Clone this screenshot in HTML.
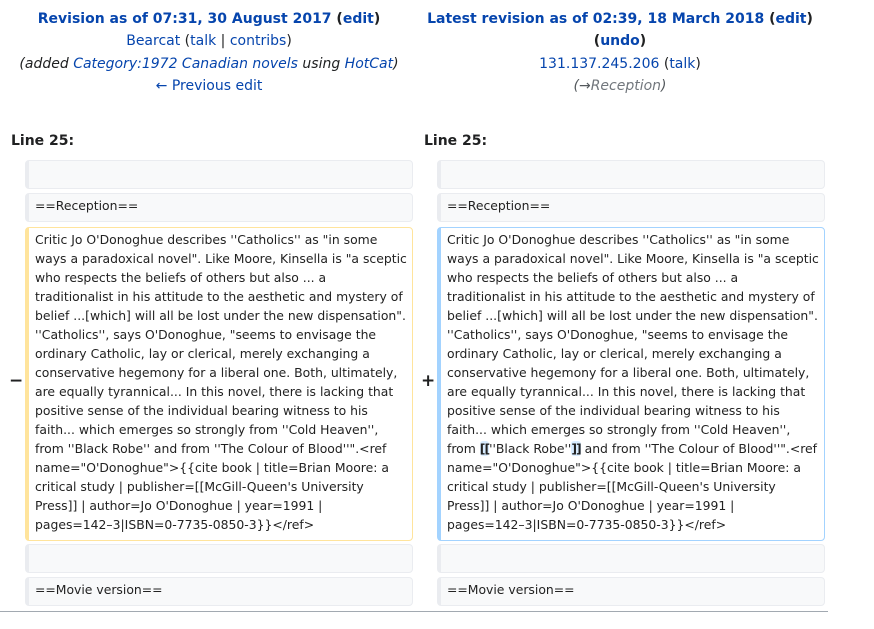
<!DOCTYPE html>
<html><head><meta charset="utf-8"><style>
body{margin:0;width:874px;height:629px;background:#fff;font-family:"DejaVu Sans","Liberation Sans",sans-serif;color:#202122;position:relative;overflow:hidden}
a{color:#0645ad;text-decoration:none}
.h{position:absolute;top:8px;text-align:center;font-size:14px;line-height:22.4px}
.h b a{color:#0645ad}
.ln{position:absolute;top:133px;font-weight:bold;font-size:14px}
.box{position:absolute;box-sizing:border-box;background:#f8f9fa;border:1px solid #eaecf0;border-left:4px solid #eaecf0;border-radius:4px;font-size:12.4px;line-height:19px;padding:2px 2px 3px 6px;white-space:nowrap;color:#222;overflow:hidden}
.del{background:#fff;border-color:#ffe49c}
.add{background:#fff;border-color:#a3d3ff}
.mk{position:absolute;font-size:17px;font-weight:bold}
.hl{background:#d8ecff;font-weight:bold;border-radius:3px;letter-spacing:-1px}
.line{position:absolute;left:0;top:611px;width:828px;height:1px;background:#a2a9b1}
</style></head><body>
<div class="h" style="left:0;width:418px"><b><a>Revision as of 07:31, 30 August 2017</a> (<a>edit</a>)</b><br><a>Bearcat</a> (<a>talk</a> | <a>contribs</a>)<br><i>(added <a>Category:1972 Canadian novels</a> using <a>HotCat</a>)</i><br><a>← Previous edit</a></div>
<div class="h" style="left:412px;width:416px"><b><a>Latest revision as of 02:39, 18 March 2018</a> (<a>edit</a>)<br>(<a>undo</a>)</b><br><a>131.137.245.206</a> (<a>talk</a>)<br><i style="color:#54595d">(→<a style="color:#72777d">Reception</a>)</i></div>
<div class="ln" style="left:11px">Line 25:</div>
<div class="ln" style="left:424px">Line 25:</div>

<div class="box" style="left:25px;top:160px;width:388px;height:29px"></div>
<div class="box" style="left:437px;top:160px;width:388px;height:29px"></div>
<div class="box" style="left:25px;top:193px;width:388px;height:29px">==Reception==</div>
<div class="box" style="left:437px;top:193px;width:388px;height:29px">==Reception==</div>

<div class="mk" style="left:9px;top:371px">−</div>
<div class="box del" style="left:25px;top:227px;width:388px;height:314px">Critic Jo O'Donoghue describes ''Catholics'' as "in some<br>ways a paradoxical novel". Like Moore, Kinsella is "a sceptic<br>who respects the beliefs of others but also ... a<br>traditionalist in his attitude to the aesthetic and mystery of<br>belief ...[which] will all be lost under the new dispensation".<br>''Catholics'', says O'Donoghue, "seems to envisage the<br>ordinary Catholic, lay or clerical, merely exchanging a<br>conservative hegemony for a liberal one. Both, ultimately,<br>are equally tyrannical... In this novel, there is lacking that<br>positive sense of the individual bearing witness to his<br>faith... which emerges so strongly from ''Cold Heaven'',<br>from ''Black Robe'' and from ''The Colour of Blood''".&lt;ref<br>name="O'Donoghue"&gt;{{cite book | title=Brian Moore: a<br>critical study | publisher=[[McGill-Queen's University<br>Press]] | author=Jo O'Donoghue | year=1991 |<br>pages=142–3|ISBN=0-7735-0850-3}}&lt;/ref&gt;</div>
<div class="mk" style="left:421px;top:371px">+</div>
<div class="box add" style="left:437px;top:227px;width:388px;height:314px">Critic Jo O'Donoghue describes ''Catholics'' as "in some<br>ways a paradoxical novel". Like Moore, Kinsella is "a sceptic<br>who respects the beliefs of others but also ... a<br>traditionalist in his attitude to the aesthetic and mystery of<br>belief ...[which] will all be lost under the new dispensation".<br>''Catholics'', says O'Donoghue, "seems to envisage the<br>ordinary Catholic, lay or clerical, merely exchanging a<br>conservative hegemony for a liberal one. Both, ultimately,<br>are equally tyrannical... In this novel, there is lacking that<br>positive sense of the individual bearing witness to his<br>faith... which emerges so strongly from ''Cold Heaven'',<br>from <span class="hl">[[</span>''Black Robe''<span class="hl">]]</span> and from ''The Colour of Blood''".&lt;ref<br>name="O'Donoghue"&gt;{{cite book | title=Brian Moore: a<br>critical study | publisher=[[McGill-Queen's University<br>Press]] | author=Jo O'Donoghue | year=1991 |<br>pages=142–3|ISBN=0-7735-0850-3}}&lt;/ref&gt;</div>

<div class="box" style="left:25px;top:544px;width:388px;height:29px"></div>
<div class="box" style="left:437px;top:544px;width:388px;height:29px"></div>
<div class="box" style="left:25px;top:577px;width:388px;height:29px">==Movie version==</div>
<div class="box" style="left:437px;top:577px;width:388px;height:29px">==Movie version==</div>
<div class="line"></div>
</body></html>
